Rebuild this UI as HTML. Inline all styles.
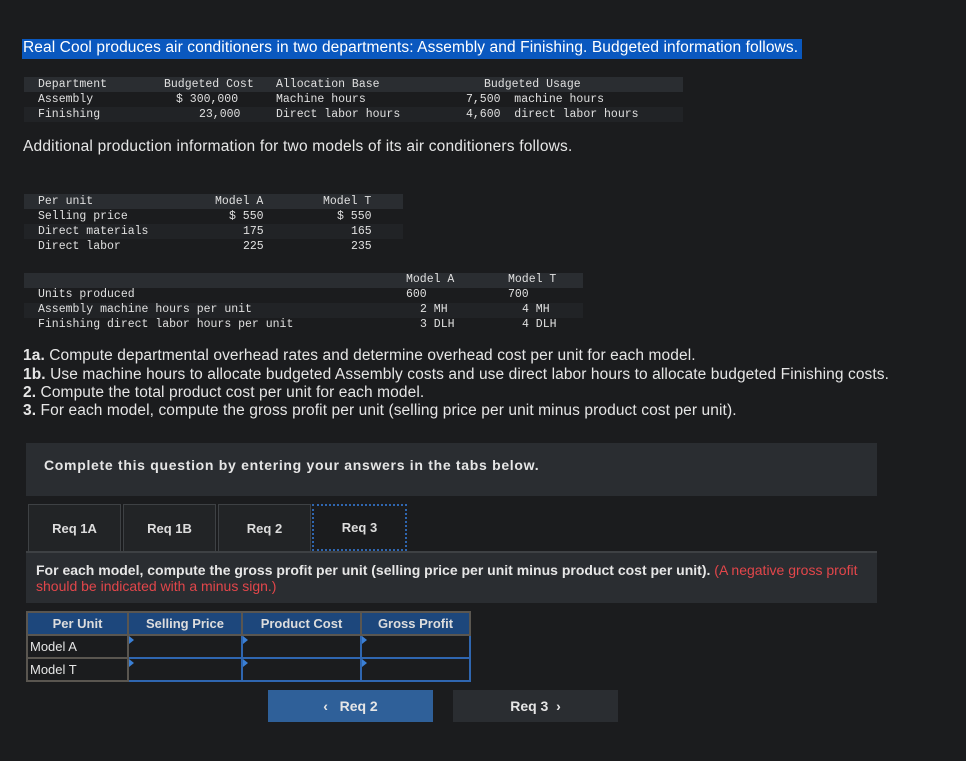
<!DOCTYPE html>
<html><head><meta charset="utf-8"><style>
*{margin:0;padding:0;box-sizing:border-box}
body{width:966px;height:761px;background:#1b1c1e;color:#e6e6e6;font-family:"Liberation Sans",sans-serif;position:relative;overflow:hidden}
.a{position:absolute;white-space:nowrap}
.m{font-family:"Liberation Mono",monospace;font-size:11.5px;color:#e0e0e0}
.hb{background:#2a2d31}
.rb{background:#212326}
.q{font-size:15.5px;color:#e6e6e6;letter-spacing:0.1px}
.q b{font-weight:800}
.tab{position:absolute;top:504px;height:47px;border:1px solid #3e4144;border-bottom:none;background:#222426;font-size:13px;font-weight:bold;color:#ddd;display:flex;align-items:center;justify-content:center}
table{border-collapse:collapse}
td,th{border:2px solid #5a5650;height:23px;font-size:13px}
th{background:#1d477c;color:#ddd;font-weight:bold}
td.i{border:2px solid #2f66b0;background:#1b1c1e;position:relative}
td.i:before{content:"";position:absolute;left:0;top:0;border-left:5px solid #3a7fd5;border-top:4px solid transparent;border-bottom:4px solid transparent}
</style></head><body>
<div class="a" style="left:22px;top:39px;width:780px;height:20px;background:#0a58bf"></div>
<div class="a" style="left:23px;top:39px;font-size:15.5px;color:#fff;letter-spacing:0.1px">Real Cool produces air conditioners in two departments: Assembly and Finishing. Budgeted information follows.</div>

<div class="a hb" style="left:24px;top:77px;width:659px;height:15px"></div>
<div class="a rb" style="left:24px;top:107px;width:659px;height:15px"></div>
<div class="a m" style="left:38px;top:78px">Department</div>
<div class="a m" style="left:164px;top:78px">Budgeted Cost</div>
<div class="a m" style="left:276px;top:78px">Allocation Base</div>
<div class="a m" style="left:484px;top:78px">Budgeted Usage</div>
<div class="a m" style="left:38px;top:93px">Assembly</div>
<div class="a m" style="left:176px;top:93px">$ 300,000</div>
<div class="a m" style="left:276px;top:93px">Machine hours</div>
<div class="a m" style="left:466px;top:93px">7,500&nbsp; machine hours</div>
<div class="a m" style="left:38px;top:108px">Finishing</div>
<div class="a m" style="left:199px;top:108px">23,000</div>
<div class="a m" style="left:276px;top:108px">Direct labor hours</div>
<div class="a m" style="left:466px;top:108px">4,600&nbsp; direct labor hours</div>

<div class="a" style="left:23px;top:138px;font-size:15.5px;color:#e6e6e6;letter-spacing:0.2px">Additional production information for two models of its air conditioners follows.</div>

<div class="a hb" style="left:24px;top:194px;width:379px;height:15px"></div>
<div class="a rb" style="left:24px;top:224px;width:379px;height:15px"></div>
<div class="a m" style="left:38px;top:195px">Per unit</div>
<div class="a m" style="left:215px;top:195px">Model A</div>
<div class="a m" style="left:323px;top:195px">Model T</div>
<div class="a m" style="left:38px;top:210px">Selling price</div>
<div class="a m" style="left:229px;top:210px">$ 550</div>
<div class="a m" style="left:337px;top:210px">$ 550</div>
<div class="a m" style="left:38px;top:225px">Direct materials</div>
<div class="a m" style="left:243px;top:225px">175</div>
<div class="a m" style="left:351px;top:225px">165</div>
<div class="a m" style="left:38px;top:240px">Direct labor</div>
<div class="a m" style="left:243px;top:240px">225</div>
<div class="a m" style="left:351px;top:240px">235</div>

<div class="a hb" style="left:24px;top:273px;width:559px;height:15px"></div>
<div class="a rb" style="left:24px;top:303px;width:559px;height:15px"></div>
<div class="a m" style="left:406px;top:273px">Model A</div>
<div class="a m" style="left:508px;top:273px">Model T</div>
<div class="a m" style="left:38px;top:288px">Units produced</div>
<div class="a m" style="left:406px;top:288px">600</div>
<div class="a m" style="left:508px;top:288px">700</div>
<div class="a m" style="left:38px;top:303px">Assembly machine hours per unit</div>
<div class="a m" style="left:420px;top:303px">2 MH</div>
<div class="a m" style="left:522px;top:303px">4 MH</div>
<div class="a m" style="left:38px;top:318px">Finishing direct labor hours per unit</div>
<div class="a m" style="left:420px;top:318px">3 DLH</div>
<div class="a m" style="left:522px;top:318px">4 DLH</div>

<div class="a q" style="left:23px;top:347px"><b>1a.</b> Compute departmental overhead rates and determine overhead cost per unit for each model.</div>
<div class="a q" style="left:23px;top:366px"><b>1b.</b> Use machine hours to allocate budgeted Assembly costs and use direct labor hours to allocate budgeted Finishing costs.</div>
<div class="a q" style="left:23px;top:384px"><b>2.</b> Compute the total product cost per unit for each model.</div>
<div class="a q" style="left:23px;top:402px"><b>3.</b> For each model, compute the gross profit per unit (selling price per unit minus product cost per unit).</div>

<div class="a" style="left:26px;top:443px;width:851px;height:53px;background:#2a2d31"></div>
<div class="a" style="left:44px;top:457px;font-size:14px;font-weight:bold;color:#e6e6e6;letter-spacing:0.7px">Complete this question by entering your answers in the tabs below.</div>

<div class="tab" style="left:28px;width:93px">Req 1A</div>
<div class="tab" style="left:123px;width:93px">Req 1B</div>
<div class="tab" style="left:218px;width:93px">Req 2</div>
<div class="tab" style="left:312px;width:95px;background:#1b1c1e;border:2px dotted #2f66b0">Req 3</div>
<div class="a" style="left:26px;top:551px;width:851px;height:2px;background:#3e4144"></div>
<div class="a" style="left:26px;top:553px;width:851px;height:50px;background:#2a2d31"></div>
<div class="a" style="left:36px;top:562px;font-size:14px;font-weight:bold;color:#e6e6e6;line-height:16px;letter-spacing:0px">For each model, compute the gross profit per unit (selling price per unit minus product cost per unit). <span style="color:#e2464a;font-weight:normal">(A negative gross profit<br>should be indicated with a minus sign.)</span></div>

<table class="a" style="left:26px;top:611px;width:445px">
<tr><th style="width:101px">Per Unit</th><th style="width:114px">Selling Price</th><th style="width:119px">Product Cost</th><th>Gross Profit</th></tr>
<tr><td style="padding-left:2px">Model A</td><td class="i"></td><td class="i"></td><td class="i"></td></tr>
<tr><td style="padding-left:2px">Model T</td><td class="i"></td><td class="i"></td><td class="i"></td></tr>
</table>

<div class="a" style="left:268px;top:690px;width:165px;height:32px;background:#2f6099;font-size:14px;font-weight:bold;color:#e6e6e6;display:flex;align-items:center;justify-content:center">‹&nbsp;&nbsp; Req 2</div>
<div class="a" style="left:453px;top:690px;width:165px;height:32px;background:#2a2d31;font-size:14px;font-weight:bold;color:#e6e6e6;display:flex;align-items:center;justify-content:center">Req 3 &nbsp;›</div>
</body></html>
